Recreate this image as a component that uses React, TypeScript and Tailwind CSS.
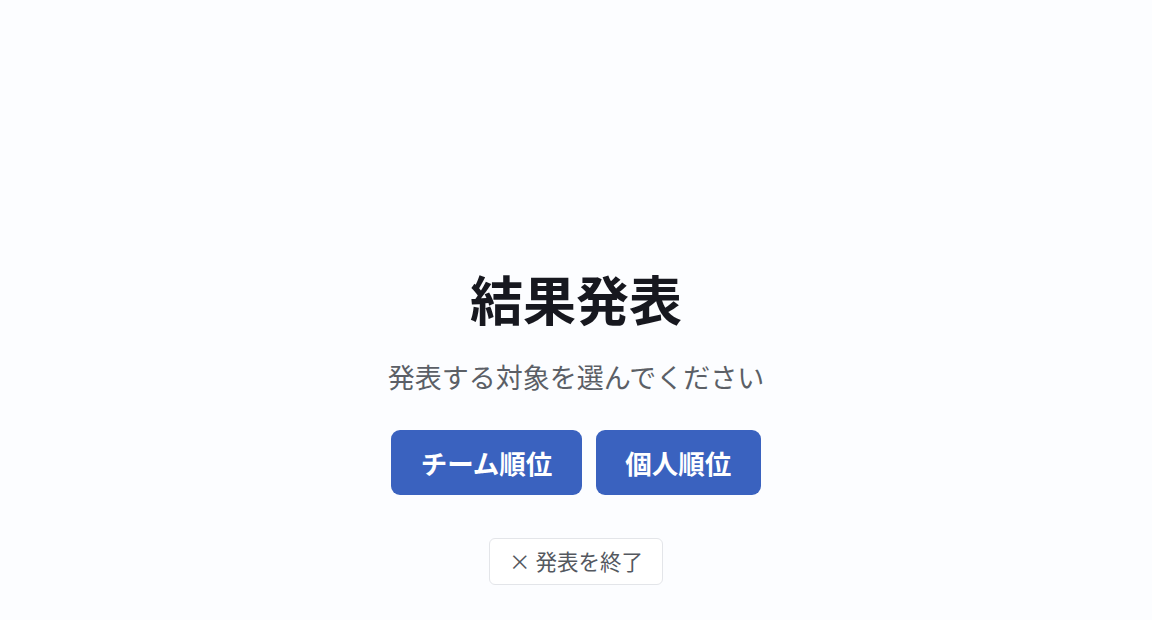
export default function App() {
  return (
    <div
      className="min-h-screen w-full bg-[#fcfdff] flex flex-col items-center pt-[266px]"
      style={{ fontFamily: '"Noto Sans CJK JP", "Noto Sans", sans-serif' }}
    >
      <h1 className="text-[53px] leading-[64px] font-bold text-[#17181f]">結果発表</h1>
      <p className="mt-[27px] text-[27px] leading-[40px] text-[#5b5f66]">発表する対象を選んでください</p>
      <div className="mt-[33px] flex gap-[14px]">
        <button className="h-[65px] px-[29.5px] rounded-[9px] bg-[#3a62bf] text-white text-[26.5px] font-bold">
          チーム順位
        </button>
        <button className="h-[65px] px-[29.5px] rounded-[9px] bg-[#3a62bf] text-white text-[26.5px] font-bold">
          個人順位
        </button>
      </div>
      <button className="mt-[43px] h-[47px] px-[19px] rounded-[6px] border border-[#e3e5e9] bg-white text-[21.5px] text-[#54585f] flex items-center">
        × 発表を終了
      </button>
    </div>
  );
}
